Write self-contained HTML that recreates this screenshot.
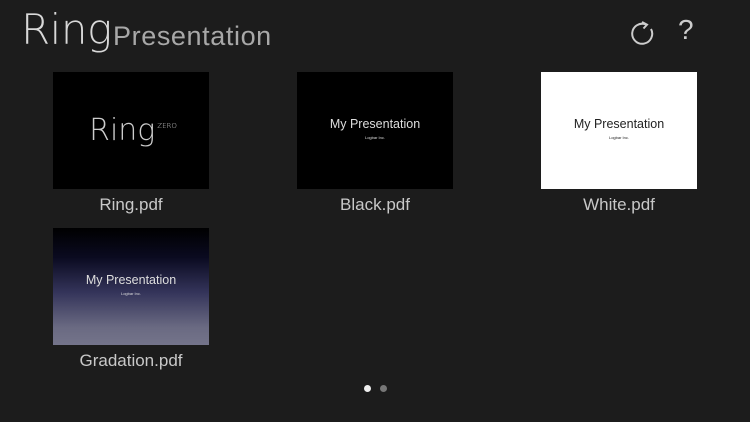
<!DOCTYPE html>
<html><head><meta charset="utf-8"><style>
*{margin:0;padding:0;box-sizing:border-box}
body{width:750px;height:422px;background:#1c1c1c;position:relative;overflow:hidden;font-family:"Liberation Sans",sans-serif}
.t{position:absolute;width:156px;height:117px;display:flex;flex-direction:column;align-items:center;justify-content:center}
.t .h{font-size:12.5px;margin-top:-4px}
.t .s{font-size:4px;margin-top:4px}
.l{position:absolute;width:156px;text-align:center;font-size:17px;color:#c8c8c8}
.dot{position:absolute;width:7px;height:7px;border-radius:50%}
</style></head><body>
<div style="position:absolute;left:21px;top:5px;color:#d8d8d8;font-size:42px;font-weight:100;letter-spacing:-0.5px;font-family:'DejaVu Sans','Liberation Sans',sans-serif">Ring</div>
<div style="position:absolute;left:113px;top:21px;color:#a8a8a8;font-size:27px;letter-spacing:0.6px;font-weight:300">Presentation</div>
<svg style="position:absolute;left:627px;top:18px" width="30" height="30" viewBox="0 0 30 30"><path d="M19 6.5A10 10 0 1 0 24 11" fill="none" stroke="#ccc" stroke-width="2"/><path d="M15 4L20 6.7L16.5 10.5" fill="none" stroke="#ccc" stroke-width="2"/></svg>
<div style="position:absolute;left:678px;top:14px;color:#ccc;font-size:28px;font-weight:300">?</div>

<div class="t" style="left:53px;top:72px;background:#000"><div style="color:#ccc;font-size:30px;font-weight:100;font-family:'DejaVu Sans',sans-serif;letter-spacing:0;margin-left:4px">Ring<sup style="font-size:7px;vertical-align:12px;margin-left:2px">ZERO</sup></div></div>
<div class="l" style="left:53px;top:195px">Ring.pdf</div>

<div class="t" style="left:297px;top:72px;background:#000;color:#ddd"><div class="h">My Presentation</div><div class="s">Logbar Inc.</div></div>
<div class="l" style="left:297px;top:195px">Black.pdf</div>

<div class="t" style="left:541px;top:72px;background:#fff;color:#222"><div class="h">My Presentation</div><div class="s">Logbar Inc.</div></div>
<div class="l" style="left:541px;top:195px">White.pdf</div>

<div class="t" style="left:53px;top:228px;background:linear-gradient(#000 0%,#0a0a20 25%,#34345a 55%,#6a6a82 85%,#74748a 100%);color:#ddd"><div class="h">My Presentation</div><div class="s">Logbar Inc.</div></div>
<div class="l" style="left:53px;top:351px">Gradation.pdf</div>

<div class="dot" style="left:364px;top:385px;background:#eee"></div>
<div class="dot" style="left:380px;top:385px;background:#777"></div>
</body></html>
